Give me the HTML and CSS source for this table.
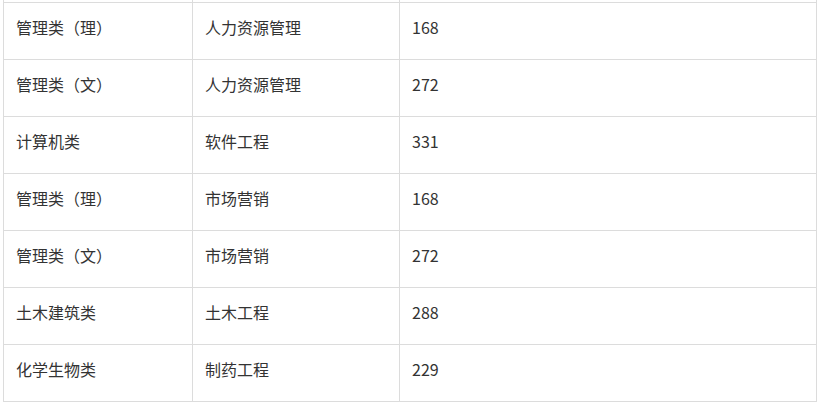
FILE: index.html
```html
<!DOCTYPE html>
<html lang="zh-CN">
<head>
<meta charset="utf-8">
<link rel="stylesheet" href="styles.css">
</head>
<body>
<div class="wrap">
<table class="score-table">
  <colgroup>
    <col class="c1"><col class="c2"><col class="c3">
  </colgroup>
  <tbody>
    <tr class="prev"><td></td><td></td><td></td></tr>
    <tr><td>管理类（理）</td><td>人力资源管理</td><td>168</td></tr>
    <tr><td>管理类（文）</td><td>人力资源管理</td><td>272</td></tr>
    <tr><td>计算机类</td><td>软件工程</td><td>331</td></tr>
    <tr><td>管理类（理）</td><td>市场营销</td><td>168</td></tr>
    <tr><td>管理类（文）</td><td>市场营销</td><td>272</td></tr>
    <tr><td>土木建筑类</td><td>土木工程</td><td>288</td></tr>
    <tr><td>化学生物类</td><td>制药工程</td><td>229</td></tr>
  </tbody>
</table>
</div>
</body>
</html>
```
FILE: styles.css
```css
html, body {
  margin: 0;
  padding: 0;
  background: #fff;
}
.wrap {
  width: 819px;
  height: 405px;
  overflow: hidden;
}
.score-table {
  margin-top: -55px;
  margin-left: 3px;
  width: 813px;
  border-collapse: collapse;
  table-layout: fixed;
  font-family: "Microsoft YaHei", "Noto Sans CJK SC", "Noto Sans", sans-serif;
  font-size: 16px;
  color: #333;
}
.c1 { width: 189px; }
.c2 { width: 207px; }
.c3 { width: 417px; }
.score-table td {
  border: 1px solid #dcdcdc;
  height: 57px;
  padding: 0 12px 9px 12px;
  box-sizing: border-box;
  vertical-align: middle;
  line-height: 20px;
  white-space: nowrap;
}
```
